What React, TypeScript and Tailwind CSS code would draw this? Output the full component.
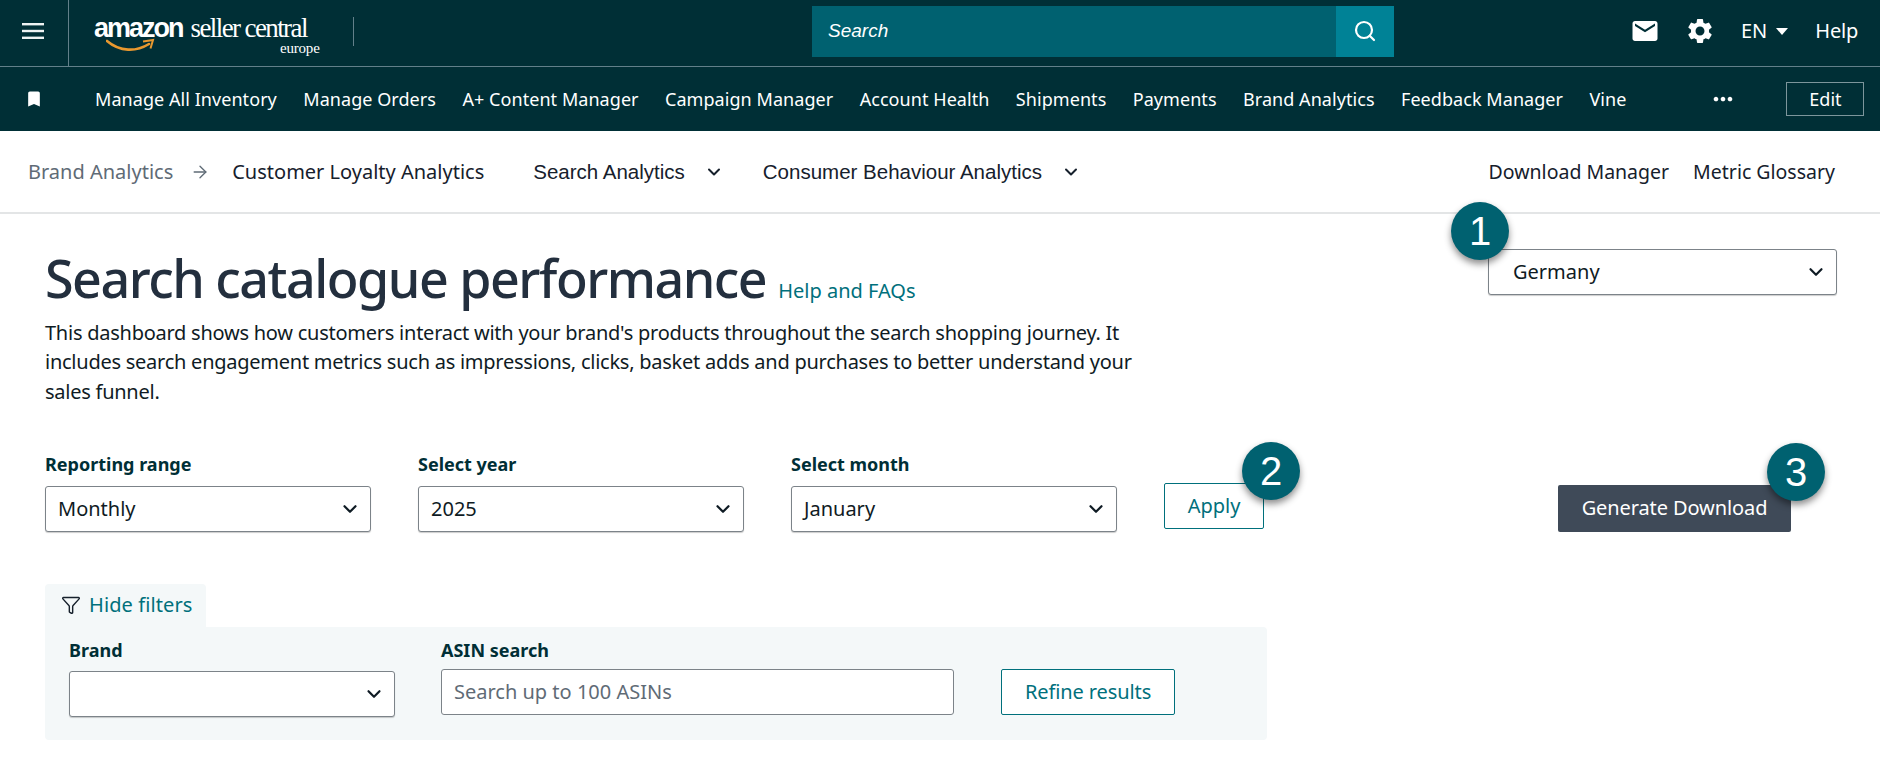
import { ArrowRight, ChevronDown, Funnel, Search } from 'lucide-react'
import { MdBookmark, MdEmail, MdMoreHoriz, MdSettings } from 'react-icons/md'

const navItems = [
  'Manage All Inventory',
  'Manage Orders',
  'A+ Content Manager',
  'Campaign Manager',
  'Account Health',
  'Shipments',
  'Payments',
  'Brand Analytics',
  'Feedback Manager',
  'Vine',
]

function Badge({ n, className }: { n: number; className: string }) {
  return (
    <div
      className={`absolute flex h-[58px] w-[58px] items-center justify-center rounded-full bg-[#006170] font-['Liberation_Sans',sans-serif] text-[40px] leading-none text-white shadow-[0_4px_7px_rgba(0,0,0,0.45)] ${className}`}
    >
      {n}
    </div>
  )
}

function SelectBox({ value, className }: { value?: string; className: string }) {
  return (
    <div
      className={`flex h-[46px] items-center justify-between rounded-[3px] border border-[#7c8389] bg-white pl-3 pr-[9px] text-[20px] text-[#0f1b24] shadow-[0_1px_1px_rgba(0,0,0,0.2)] ${className}`}
    >
      <span>{value}</span>
      <ChevronDown className="h-[22px] w-[22px] text-[#0f1b24]" strokeWidth={2.4} />
    </div>
  )
}

function Field({ label, value }: { label: string; value: string }) {
  return (
    <div className="w-[326px]">
      <div className="mb-[10px] text-[18px] font-bold leading-[24px] text-[#002f36]">{label}</div>
      <SelectBox value={value} className="w-full" />
    </div>
  )
}

export default function App() {
  return (
    <div className="h-[779px] w-[1880px] overflow-hidden bg-white font-['Noto_Sans',sans-serif]">
      <header className="flex h-[67px] items-center border-b border-[#62808a] bg-[#002f36] text-white">
        <div className="flex h-full w-[69px] shrink-0 items-center justify-center border-r border-[#62808a] pb-[4px] pr-[3px]">
          <svg width="22" height="16" viewBox="0 0 22 16" fill="#eef3f3">
            <rect width="22" height="2.4" y="0" />
            <rect width="22" height="2.4" y="6.8" />
            <rect width="22" height="2.4" y="13.6" />
          </svg>
        </div>
        <div className="flex h-full items-center pb-[4px]">
          <div className="relative ml-[25px] h-[50px] w-[259px] shrink-0 leading-none">
            <div className="flex items-baseline pt-[9px]">
              <span className="font-['Liberation_Sans',sans-serif] text-[27px] font-bold tracking-[-2px]">amazon</span>
              <span className="ml-[8px] font-['Liberation_Serif',serif] text-[27px] tracking-[-1.6px]">seller central</span>
            </div>
            <span className="absolute left-[186px] top-[35px] font-['Liberation_Serif',serif] text-[15px] leading-[15px] tracking-[-0.2px]">europe</span>
            <svg className="absolute left-[12px] top-[32px]" width="50" height="16" viewBox="0 0 50 16" fill="none">
              <path d="M1 3 C 14 14, 30 14, 43 6" stroke="#e8982f" strokeWidth="2.6" strokeLinecap="round" />
              <path d="M37 3.5 L47 2 L44.5 10.5" stroke="#e8982f" strokeWidth="2" fill="none" />
            </svg>
          </div>
          <div className="h-[29px] w-px bg-[#62808a]" />
          <div className="ml-[458px] flex h-[51px] w-[582px] bg-[#006170]">
            <div className="flex-1 pl-[16px] font-['Liberation_Sans',sans-serif] text-[19px] italic leading-[50px]">Search</div>
            <div className="flex w-[58px] items-center justify-center bg-[#008296]">
              <Search className="h-[24px] w-[24px]" strokeWidth={2.2} />
            </div>
          </div>
          <MdEmail className="ml-[236px] h-[30px] w-[30px]" />
          <MdSettings className="ml-[25px] h-[30px] w-[30px]" />
          <span className="ml-[26px] text-[20px]">EN</span>
          <svg className="ml-[9px]" width="12" height="7" viewBox="0 0 12 7" fill="white">
            <path d="M0 0 H12 L6 7 Z" />
          </svg>
          <span className="ml-[27px] text-[20px] tracking-[-0.2px]">Help</span>
        </div>
      </header>

      <nav className="flex h-[64px] items-center bg-[#002f36] pl-[24px] text-[18px] tracking-[0.06px] text-white">
        <MdBookmark className="mr-[51px] h-[20px] w-[20px]" />
        <div className="flex gap-[26.4px]">
          {navItems.map((item) => (
            <span key={item}>{item}</span>
          ))}
        </div>
        <MdMoreHoriz className="ml-[83px] h-[28px] w-[28px]" />
        <div className="ml-[49px] flex h-[34px] w-[78px] items-center justify-center border border-[#7d969c]">Edit</div>
      </nav>

      <div className="flex h-[83px] items-center border-b-2 border-[#e3e5e6] pl-[28px] pr-[45px] text-[#16202c]">
        <span className="text-[20px] text-[#5f6b76]">Brand Analytics</span>
        <ArrowRight className="ml-[17px] h-[20px] w-[20px] text-[#5f6b76]" strokeWidth={1.6} />
        <span className="ml-[22px] text-[20px]">Customer Loyalty Analytics</span>
        <span className="ml-[49px] pt-[2px] font-['Liberation_Sans',sans-serif] text-[20.5px]">Search Analytics</span>
        <ChevronDown className="ml-[19px] h-[20px] w-[20px]" strokeWidth={2.4} />
        <span className="ml-[39px] pt-[2px] font-['Liberation_Sans',sans-serif] text-[20.5px]">Consumer Behaviour Analytics</span>
        <ChevronDown className="ml-[19px] h-[20px] w-[20px]" strokeWidth={2.4} />
        <span className="ml-auto text-[19.5px]">Download Manager</span>
        <span className="ml-[24px] text-[19.5px]">Metric Glossary</span>
      </div>

      <main className="px-[45px]">
        <div className="flex justify-between">
          <div className="w-[1110px] pt-[29px]">
            <div className="flex items-baseline">
              <h1 className="text-[52px] font-medium leading-[70px] tracking-[-1.5px] text-[#232f3e]">Search catalogue performance</h1>
              <a className="ml-[12px] text-[20px] text-[#00707c]">Help and FAQs</a>
            </div>
            <p className="mt-[5px] text-[20px] leading-[29.3px] tracking-[-0.25px] text-[#0f1b24]">
              This dashboard shows how customers interact with your brand's products throughout the search shopping journey. It includes search engagement metrics such as impressions, clicks, basket adds and purchases to better understand your sales funnel.
            </p>
          </div>
          <div className="relative mr-[-2px] mt-[35px]">
            <SelectBox value="Germany" className="w-[349px] pl-6" />
            <Badge n={1} className="left-[-37px] top-[-47px]" />
          </div>
        </div>

        <div className="mt-[46px] flex items-end gap-[47px]">
          <Field label="Reporting range" value="Monthly" />
          <Field label="Select year" value="2025" />
          <Field label="Select month" value="January" />
          <div className="relative mb-[3px]">
            <button className="h-[46px] w-[100px] rounded-[2px] border border-[#00707c] bg-white text-[20px] text-[#00707c]">Apply</button>
            <Badge n={2} className="left-[78px] top-[-41px]" />
          </div>
          <div className="relative ml-auto mr-[44px]">
            <button className="h-[47px] w-[233px] rounded-[2px] bg-[#3f4a58] text-[20px] tracking-[-0.1px] text-white">Generate Download</button>
            <Badge n={3} className="left-[209px] top-[-42px]" />
          </div>
        </div>

        <div className="mt-[52px] w-[1222px]">
          <div className="flex h-[43px] w-[161px] items-center rounded-t-[4px] bg-[#f4f8f9] pl-[16px]">
            <Funnel className="h-[20px] w-[20px] text-[#16202c]" strokeWidth={1.7} />
            <span className="ml-[8px] text-[20px] tracking-[0.1px] text-[#00707c]">Hide filters</span>
          </div>
          <div className="flex h-[113px] items-start rounded-b-[4px] rounded-tr-[4px] bg-[#f4f8f9] pl-[24px] pt-[11px]">
            <div className="w-[326px]">
              <div className="mb-[9px] text-[18px] font-bold leading-[24px] text-[#002f36]">Brand</div>
              <SelectBox className="w-full" />
            </div>
            <div className="ml-[46px] w-[513px]">
              <div className="mb-[7px] text-[18px] font-bold leading-[24px] text-[#002f36]">ASIN search</div>
              <div className="flex h-[46px] items-center rounded-[3px] border border-[#7c8389] bg-white pl-3 text-[20px] text-[#5f6b76]">
                Search up to 100 ASINs
              </div>
            </div>
            <button className="ml-[47px] mt-[31px] h-[46px] w-[174px] rounded-[2px] border border-[#00707c] bg-white text-[20px] tracking-[-0.1px] text-[#00707c]">
              Refine results
            </button>
          </div>
        </div>
      </main>
    </div>
  )
}
